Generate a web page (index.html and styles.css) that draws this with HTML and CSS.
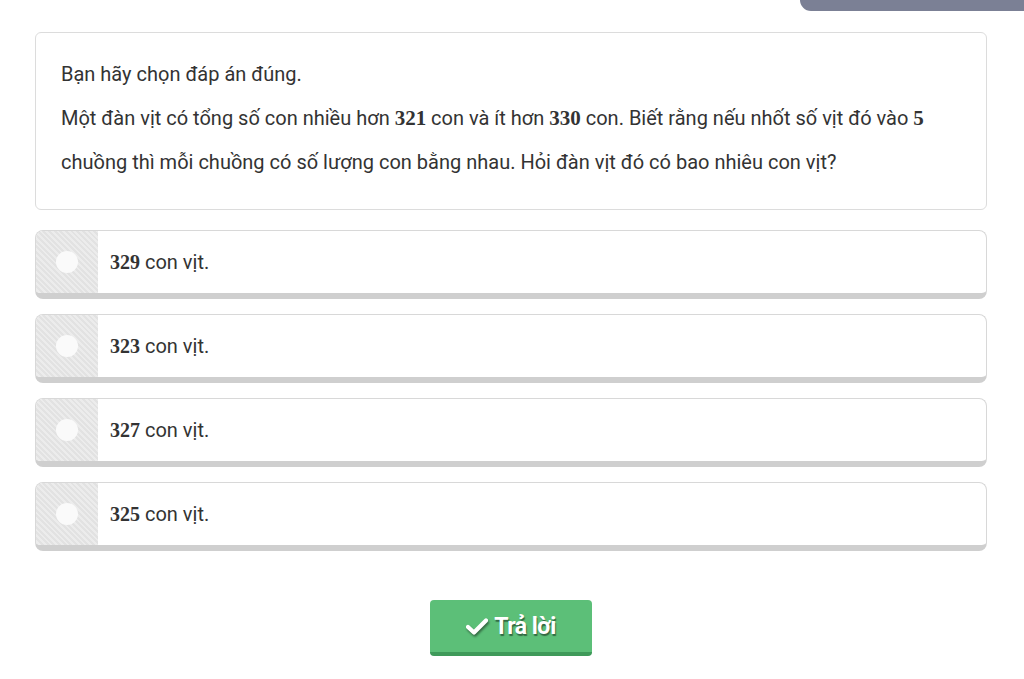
FILE: index.html
```html
<!DOCTYPE html>
<html lang="vi">
<head>
  <meta charset="UTF-8" />
  <meta name="viewport" content="width=device-width, initial-scale=1.0"/>
  <title>Trắc nghiệm</title>
  <link rel="stylesheet" href="styles.css">
</head>
<body>
  <div id="top-tab"></div>

  <div id="quiz">
    <div class="question">
      <p>Bạn hãy chọn đáp án đúng.</p>
      <p>Một đàn vịt có tổng số con nhiều hơn <span class="num">321</span> con và ít hơn <span class="num">330</span> con. Biết rằng nếu nhốt số vịt đó vào <span class="num">5</span> chuồng thì mỗi chuồng có số lượng con bằng nhau. Hỏi đàn vịt đó có bao nhiêu con vịt?</p>
    </div>

    <div class="options">
      <label class="option">
        <span class="option-check"><span class="dot"></span></span>
        <span class="option-text"><span class="num">329</span> con vịt.</span>
      </label>
      <label class="option">
        <span class="option-check"><span class="dot"></span></span>
        <span class="option-text"><span class="num">323</span> con vịt.</span>
      </label>
      <label class="option">
        <span class="option-check"><span class="dot"></span></span>
        <span class="option-text"><span class="num">327</span> con vịt.</span>
      </label>
      <label class="option">
        <span class="option-check"><span class="dot"></span></span>
        <span class="option-text"><span class="num">325</span> con vịt.</span>
      </label>
    </div>

    <div class="actions">
      <button id="answer-button">
        <svg width="22" height="17" viewBox="0 0 22 17"><path d="M2 9 L8 14.5 L20 2.5" fill="none" stroke="#fff" stroke-width="4.2" stroke-linecap="round" stroke-linejoin="round"/></svg>
        Trả lời
      </button>
    </div>
  </div>
</body>
</html>
```

FILE: styles.css
```css
* {
  box-sizing: border-box;
  margin: 0;
  padding: 0;
}

body {
  font-family: Roboto, "Noto Sans", sans-serif;
  background: #fff;
  color: #333;
  font-size: 20px;
}

#top-tab {
  position: absolute;
  top: 0;
  right: 0;
  width: 224px;
  height: 11px;
  background: #7b8095;
  border-bottom-left-radius: 16px;
}

#quiz {
  width: 952px;
  margin-left: 35px;
  padding-top: 32px;
}

.num {
  font-family: "Liberation Serif", serif;
  font-weight: bold;
  font-size: 21px;
  line-height: 1;
}

.question {
  border: 1px solid #dcdcdc;
  border-radius: 6px;
  padding: 19px 25px 25px 25px;
  line-height: 44px;
}

.options {
  display: flex;
  flex-direction: column;
  gap: 15px;
  margin-top: 20px;
}

.option {
  display: flex;
  height: 69px;
  border: 1px solid #d8d8d8;
  border-bottom: 6px solid #cfcfcf;
  border-radius: 8px;
  overflow: hidden;
  cursor: pointer;
}

.option-check {
  width: 62px;
  flex-shrink: 0;
  display: flex;
  align-items: center;
  justify-content: center;
  background: repeating-linear-gradient(45deg, #e2e2e2 0 2px, #ececec 2px 4px);
  box-shadow: 0 6px 0 #9a9a9a;
}

.dot {
  width: 22px;
  height: 22px;
  border-radius: 50%;
  background: #fafafa;
}

.option-text {
  align-self: center;
  padding-left: 12px;
  font-size: 20px;
}

.option-text .num {
  font-size: 20px;
}

.actions {
  display: flex;
  justify-content: center;
  margin-top: 49px;
}

#answer-button {
  display: flex;
  align-items: center;
  justify-content: center;
  gap: 6px;
  width: 162px;
  height: 56px;
  background: #5cbf78;
  border: none;
  border-bottom: 4px solid #3f9a5a;
  border-radius: 4px;
  color: #fff;
  font-family: Roboto, sans-serif;
  font-weight: bold;
  font-size: 23px;
  letter-spacing: -0.5px;
  text-shadow: 1px 2px 1px rgba(0, 0, 0, 0.45);
  cursor: pointer;
}

#answer-button svg {
  filter: drop-shadow(1px 2px 1px rgba(0, 0, 0, 0.45));
}
```
